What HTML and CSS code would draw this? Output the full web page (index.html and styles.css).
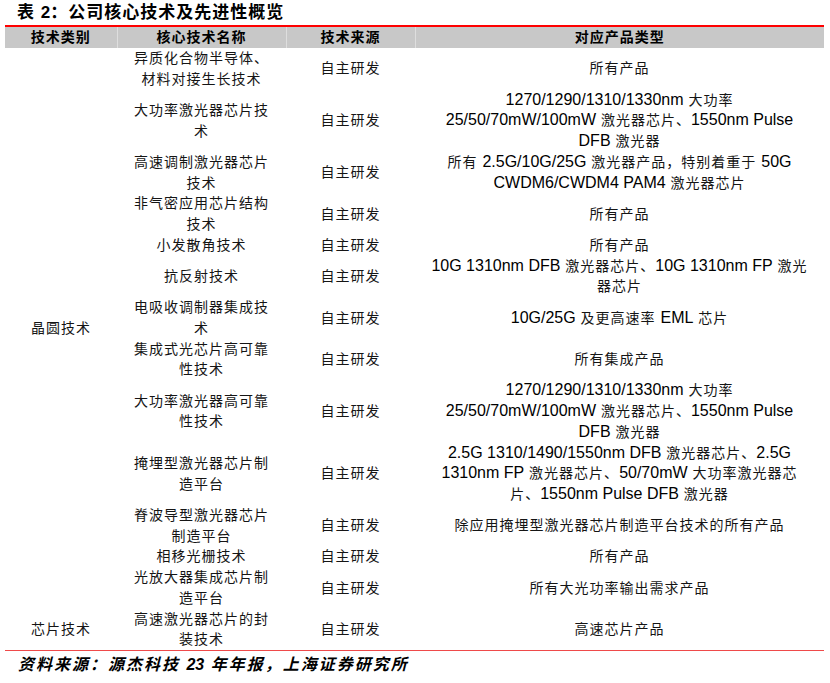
FILE: index.html
```html
<!DOCTYPE html>
<html lang="zh">
<head>
<meta charset="utf-8">
<title>表 2</title>
<link rel="stylesheet" href="styles.css">
</head>
<body>
<div class="page">
  <div class="title">表 <span class="num">2</span>：公司核心技术及先进性概览</div>
  <table class="tbl">
    <colgroup>
      <col class="c1"><col class="c2"><col class="c3"><col class="c4">
    </colgroup>
    <thead>
      <tr><th>技术类别</th><th>核心技术名称</th><th>技术来源</th><th>对应产品类型</th></tr>
    </thead>
    <tbody>
      <tr class="r2"><td rowspan="13">晶圆技术</td><td>异质化合物半导体、<br>材料对接生长技术</td><td>自主研发</td><td>所有产品</td></tr>
      <tr class="r3"><td>大功率激光器芯片技<br>术</td><td>自主研发</td><td><span class="en">1270/1290/1310/1330nm</span> 大功率<br><span class="en">25/50/70mW/100mW</span> 激光器芯片、<span class="en">1550nm Pulse</span><br><span class="en">DFB</span> 激光器</td></tr>
      <tr class="r2"><td>高速调制激光器芯片<br>技术</td><td>自主研发</td><td>所有 <span class="en">2.5G/10G/25G</span> 激光器产品，特别着重于 <span class="en">50G</span><br><span class="en">CWDM6/CWDM4 PAM4</span> 激光器芯片</td></tr>
      <tr class="r2"><td>非气密应用芯片结构<br>技术</td><td>自主研发</td><td>所有产品</td></tr>
      <tr class="r1"><td>小发散角技术</td><td>自主研发</td><td>所有产品</td></tr>
      <tr class="r2"><td>抗反射技术</td><td>自主研发</td><td><span class="en">10G 1310nm DFB</span> 激光器芯片、<span class="en">10G 1310nm FP</span> 激光<br>器芯片</td></tr>
      <tr class="r2"><td>电吸收调制器集成技<br>术</td><td>自主研发</td><td><span class="en">10G/25G</span> 及更高速率 <span class="en">EML</span> 芯片</td></tr>
      <tr class="r2"><td>集成式光芯片高可靠<br>性技术</td><td>自主研发</td><td>所有集成产品</td></tr>
      <tr class="r3"><td>大功率激光器高可靠<br>性技术</td><td>自主研发</td><td><span class="en">1270/1290/1310/1330nm</span> 大功率<br><span class="en">25/50/70mW/100mW</span> 激光器芯片、<span class="en">1550nm Pulse</span><br><span class="en">DFB</span> 激光器</td></tr>
      <tr class="r3"><td>掩埋型激光器芯片制<br>造平台</td><td>自主研发</td><td><span class="en">2.5G 1310/1490/1550nm DFB</span> 激光器芯片、<span class="en">2.5G</span><br><span class="en">1310nm FP</span> 激光器芯片、<span class="en">50/70mW</span> 大功率激光器芯<br>片、<span class="en">1550nm Pulse DFB</span> 激光器</td></tr>
      <tr class="r2"><td>脊波导型激光器芯片<br>制造平台</td><td>自主研发</td><td>除应用掩埋型激光器芯片制造平台技术的所有产品</td></tr>
      <tr class="r1"><td>相移光栅技术</td><td>自主研发</td><td>所有产品</td></tr>
      <tr class="r2"><td>光放大器集成芯片制<br>造平台</td><td>自主研发</td><td>所有大光功率输出需求产品</td></tr>
      <tr class="r2"><td>芯片技术</td><td>高速激光器芯片的封<br>装技术</td><td>自主研发</td><td>高速芯片产品</td></tr>
    </tbody>
  </table>
  <div class="source">资料来源：源杰科技 <span class="num">23</span> 年年报，上海证券研究所</div>
</div>
</body>
</html>
```
FILE: styles.css
```css
html, body {
  margin: 0;
  padding: 0;
  background: #ffffff;
}
body {
  font-family: "Liberation Sans", "Noto Sans CJK SC", sans-serif;
  color: #111111;
}
.page {
  width: 830px;
  height: 683px;
  padding: 0 6px 0 5px;
  box-sizing: border-box;
}
.title {
  height: 25px;
  line-height: 25px;
  padding-left: 12px;
  font-size: 17px;
  font-weight: bold;
  letter-spacing: 1px;
  color: #000000;
  white-space: nowrap;
}
.title .num, .source .num {
  font-family: "Liberation Sans", sans-serif;
  letter-spacing: 0;
}
.tbl {
  width: 819px;
  table-layout: fixed;
  border-collapse: collapse;
  border-top: 2px solid #ff0000;
  border-bottom: 1px solid #ef4a4a;
}
.c1 { width: 112px; }
.c2 { width: 169px; }
.c3 { width: 129px; }
.c4 { width: 409px; }
.tbl th {
  background: #c8c8c8;
  height: 21px;
  padding: 0;
  line-height: 21px;
  font-size: 14px;
  font-weight: bold;
  letter-spacing: 1px;
  color: #000000;
  border-left: 1px solid #dedede;
  text-align: center;
}
.tbl th:first-child { border-left: none; }
.tbl td {
  padding: 0;
  text-align: center;
  vertical-align: middle;
  font-size: 14px;
  letter-spacing: 1px;
  line-height: 20.76px;
  white-space: nowrap;
  color: #151515;
}
.tbl tr.r1 td { height: 20.76px; }
.tbl tr.r2 td { height: 41.52px; }
.tbl tr.r3 td { height: 62.28px; }
.en {
  font-family: "Liberation Sans", sans-serif;
  font-size: 16px;
  letter-spacing: 0;
  line-height: 16px;
  color: #000000;
}
.source {
  height: 28px;
  line-height: 28px;
  padding-left: 13px;
  font-size: 16px;
  font-weight: bold;
  font-style: italic;
  letter-spacing: 2px;
  color: #000000;
  white-space: nowrap;
}
```
